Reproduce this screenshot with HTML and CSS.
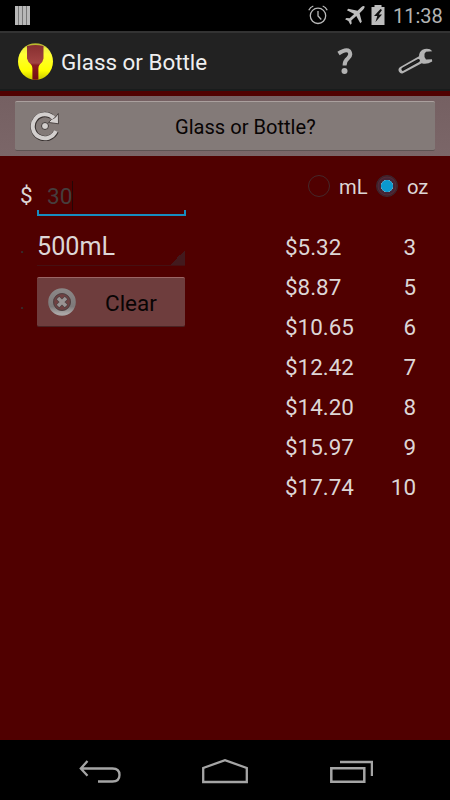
FILE: index.html
```html
<!DOCTYPE html>
<html lang="en">
<head>
<meta charset="utf-8">
<title>Glass or Bottle</title>
<link rel="stylesheet" href="styles.css">
</head>
<body>
<div class="screen">
  <header class="status">
    <div class="bars"><i></i><i></i><i></i><i></i></div>
    <svg class="alarm" width="20" height="20" viewBox="0 0 20 20" fill="none" stroke="#b9b9b9" stroke-width="1.3"><circle cx="10" cy="10.8" r="7.7"/><path d="M10 6v5l3.3 3.5M.8 5.2Q2.2 2.2 5.3 1M19.2 5.2Q17.800 2.200 14.700 1"/></svg>
    <svg class="plane" width="20" height="20" viewBox="0 0 20 20" fill="#bdbdbd"><path d="M19.300.3q1 1-1 3.200l-3.700 3.700L16.800 15.800l-1.500 1.500-4-7.200-5 4.500.4 2.900-1.300 1.200-2-3.600L.1 13.200l1.300-1.300 3.200.4L9.200 7.900 1.900 4.300l1.400-1.600L12.500 4.700 16.200 1.300Q18.300-.6 19.300.3z"/></svg>
    <svg class="battery" width="14" height="20" viewBox="0 0 14 20"><path fill="#bdbdbd" d="M3.500 0h7v2H13.500v18H.5V2h3z"/><path fill="#111" d="M9.500 4 3 11h3.300l-1.800 6L11 9.500H7.800L11 5z"/></svg>
    <span class="time">11:38</span>
  </header>

  <div class="actionbar">
    <svg class="logo" width="36" height="38" viewBox="0 0 36 38">
      <defs>
        <linearGradient id="cup" x1="0" y1="0" x2="0" y2="1"><stop offset="0" stop-color="#872f30"/><stop offset=".5" stop-color="#a24443"/><stop offset=".56" stop-color="#8a1c20"/><stop offset="1" stop-color="#720b10"/></linearGradient>
        <linearGradient id="sun" x1="0" y1="0" x2="0" y2="1"><stop offset="0" stop-color="#a9a82b"/><stop offset=".14" stop-color="#eeee42"/><stop offset=".3" stop-color="#ffff35"/><stop offset=".75" stop-color="#ffff00"/><stop offset="1" stop-color="#c6c600"/></linearGradient>
        <clipPath id="disc"><ellipse cx="17.500" cy="18.500" rx="17.500" ry="18.300"/></clipPath>
      </defs>
      <ellipse cx="17.500" cy="18.500" rx="17.500" ry="18.300" fill="url(#sun)"/>
      <path clip-path="url(#disc)" fill="url(#cup)" d="M9 3Q17.500 1 25.500 3v12.500q-.5 3.500-3.500 5.700-1.600 1.300-1.600 4V38h-6V25.200q0-2.700-1.600-4-3-2.200-3.800-5.700z"/>
    </svg>
    <h1>Glass or Bottle</h1>
    <svg class="help" width="18" height="29" viewBox="0 0 18 29"><path d="M1.500 6.500Q9 1.500 12.300 4.300q2.400 3.600-1.300 6.900Q7.500 14 7.600 18.500" fill="none" stroke="#b3b3b3" stroke-width="4"/><circle cx="7.500" cy="24" r="3" fill="#b3b3b3"/></svg>
    <svg class="wrench" width="36" height="28" viewBox="0 0 36 28"><path fill="#b3b3b3" d="M34.300 4.200 32 2.200Q28 1 24.500 2.800 21 5 21 9.300L1.800 20.300Q-.3 22 .9 24.500q1.500 2.500 4 1.700L23.700 16.300Q28.500 18 34.200 14.600L34 12.200l-6 .3-1.500-2.500V6.800l1.500-2z"/><path d="M5 22.200 20.300 13.600" stroke="#151515" stroke-width="3.200" stroke-linecap="round"/><path d="M5.800 21.700 20.300 13.600" stroke="#222" stroke-width="1.500"/></svg>
  </div>

  <div class="band">
    <div class="button compute">
      <svg width="30" height="30" viewBox="0 0 30 30" fill="none"><path d="M21.800 5.600A12 12 0 1 0 26.100 20.500" stroke="#37302f" stroke-width="5.400"/><path fill="#d3cfce" stroke="#37302f" stroke-width=".8" d="m28.300 2.500.2 10.300-10-1.400 3.100-3 3.700-2z"/><path d="M23.600 7.200A12 12 0 1 0 25.800 20" stroke="#d3cfce" stroke-width="4"/><circle cx="15" cy="15" r="3.500" fill="#d3cfce" stroke="#37302f" stroke-width=".9"/></svg>
      <span>Glass or Bottle?</span>
    </div>
  </div>

  <main>
    <section class="form">
      <span class="dollar">$</span>
      <div class="field"><span>30</span></div>
      <span class="dot">.</span>
      <div class="spinner">500mL</div>
      <span class="dot low">.</span>
      <div class="button clear">
        <svg width="30" height="30" viewBox="0 0 30 30"><defs><linearGradient id="ring" x1="0" y1="0" x2="0" y2="1"><stop offset="0" stop-color="#8a8686"/><stop offset=".7" stop-color="#7d7979"/><stop offset="1" stop-color="#aaa6a6"/></linearGradient></defs><circle cx="15" cy="15" r="11.300" fill="#6d4545" stroke="url(#ring)" stroke-width="5"/><circle cx="15" cy="15" r="8.400" fill="#6f4142" stroke="#4b4142"/><path d="m10.500 10.500 9 9m0-9-9 9" stroke="#4b4142" stroke-width="4.600"/><path d="m11 11 8 8m0-8-8 8" stroke="#999292" stroke-width="3.600"/></svg>
        <span>Clear</span>
      </div>
    </section>
    <section class="results">
      <div class="units"><i class="radio"></i><span class="ml">mL</span><i class="radio on"></i><span class="oz">oz</span></div>
      <div class="row"><span>$5.32</span><span>3</span></div>
      <div class="row"><span>$8.87</span><span>5</span></div>
      <div class="row"><span>$10.65</span><span>6</span></div>
      <div class="row"><span>$12.42</span><span>7</span></div>
      <div class="row"><span>$14.20</span><span>8</span></div>
      <div class="row"><span>$15.97</span><span>9</span></div>
      <div class="row"><span>$17.74</span><span>10</span></div>
    </section>
  </main>

  <nav>
    <svg width="42" height="26" viewBox="0 0 42 26" fill="none" stroke="#a5a5a5" stroke-width="2.300"><path d="M8.500 2 1.800 9.500l6.700 7.300M2 9.500h31.500q7 0 7 6.500t-7 6.500H19"/></svg>
    <svg width="46" height="26" viewBox="0 0 46 26" fill="none" stroke="#a5a5a5" stroke-width="2.300"><path d="M1.200 23V9L23 1.200 44.800 9v14z"/></svg>
    <svg width="44" height="26" viewBox="0 0 44 26" fill="none" stroke="#a5a5a5" stroke-width="2.500"><path d="M2.300 9.300h33v13.500h-33zM11 3h32v14"/></svg>
  </nav>
</div>
</body>
</html>
```
FILE: styles.css
```css
* { box-sizing: border-box; }
body { margin: 0; background: #000; }
svg { display: block; flex: none; }
.screen {
  width: 450px; height: 800px; display: flex; flex-direction: column;
  background: #500000; font-family: Roboto, sans-serif; overflow: hidden;
}
.status { height: 31px; background: #000; display: flex; align-items: flex-start; }
.bars { display: flex; gap: 1px; margin: 6px 0 0 15px; background: #777; }
.bars i { width: 3px; height: 19px; background: #b8b8b8; }
.alarm { margin: 5px 0 0 278px; }
.plane { margin: 6px 0 0 17px; }
.battery { margin: 5px 0 0 6px; }
.time { margin: 4px 0 0 8px; font-size: 20px; line-height: 24px; color: #b4b4b4; }
.actionbar {
  height: 60px; background: #222; display: flex; align-items: flex-start;
  border-top: 2px solid #333; border-bottom: 2px solid #181c1c;
}
.logo { margin: 10px 0 0 18px; }
h1 {
  margin: 15px 0 0 7px; width: 268px; font-size: 22.4px; line-height: 28px;
  font-weight: 400; color: #efefef;
}
.help { margin: 14px 0 0 8px; }
.wrench { margin: 14px 0 0 43px; }
.band { height: 65px; flex: none; border-top: 5px solid #500000; background: linear-gradient(#756062, #7b6668); padding: 5px 15px; }
.button { border-radius: 2px; display: flex; align-items: center; color: #080404; }
.compute {
  height: 50px; background: #837a78; border-top: 1px solid #aaa09e; border-bottom: 1px solid #5d5252;
  padding-left: 15px; font-size: 20.1px;
}
.compute span { margin: 2px 0 0 115px; }
main { flex: 1; display: flex; justify-content: space-between; color: #ddd6d6; }
.form { display: grid; grid-template-columns: 17px 149px; grid-template-rows: 61px 49px 51px; margin-left: 20px; align-content: start; }
.dollar { font-size: 22.5px; line-height: 26px; margin-top: 26px; }
.field {
  margin-top: 20px; height: 40px; display: flex; align-items: flex-start;
  border-bottom: 2px solid #168dc0; padding-left: 11px;
  background: linear-gradient(#168dc0, #168dc0) left bottom / 2px 4px no-repeat, linear-gradient(#168dc0, #168dc0) right bottom / 2px 4px no-repeat;
}
.field span { font-size: 22.5px; line-height: 30px; height: 30px; margin: 5px 0 0 -1px; color: #463d3d; border-right: 1px solid #250606; }
.dot { font-size: 18px; line-height: 20px; color: #303030; margin-top: 20px; }
.dot.low { margin-top: 27px; }
.spinner {
  font-size: 25.2px; line-height: 30px; padding-top: 15px; width: 148px;
  border-bottom: 1px solid #451012;
  background: linear-gradient(135deg, transparent 50%, #42191d 50%) right bottom / 15px 15px no-repeat;
}
.clear {
  margin-top: 11px; height: 50px; width: 148px; background: #6e3d3d; border-top: 1px solid #9b6666;
  border-bottom: 1px solid #492323; padding-left: 10px; font-size: 22.5px;
}
.clear span { margin: 2px 0 0 28px; }
.results { width: 165px; }
.units { height: 71px; display: flex; align-items: flex-start; padding: 19px 0 0 23px; font-size: 20.2px; line-height: 24px; }
.radio { width: 22px; height: 22px; flex: none; border-radius: 50%; border: 1px solid #45282a; }
.radio.on { border-color: #3b2931; background: radial-gradient(circle, #0b99cf 0 5.5px, #6fb0c8 6px, #442435 6.500px 8px, #552b35 9px, #3b1a25 10px); }
.ml { width: 46px; flex: none; padding-left: 9px; }
.oz { padding-left: 9px; }
.row { height: 40px; display: flex; justify-content: space-between; font-size: 22.4px; line-height: 40px; padding-right: 34px; }
nav { height: 60px; flex: none; background: #000; display: flex; align-items: flex-start; padding: 19px 77px 0 79px; justify-content: space-between; }
```
